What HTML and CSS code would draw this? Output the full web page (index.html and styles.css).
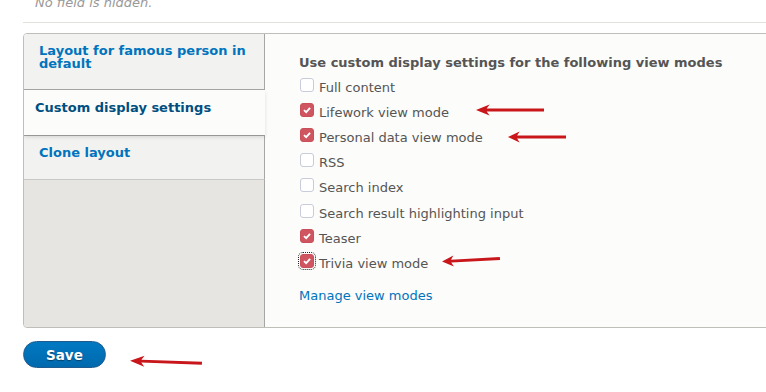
FILE: index.html
```html
<!DOCTYPE html>
<html lang="en">
<head>
    <meta charset="UTF-8">
    <meta name="viewport" content="width=device-width, initial-scale=1.0">
    <title>Manage display</title>
    <link rel="stylesheet" href="styles.css">
</head>
<body>

    <div class="page">
        <p class="description">No field is hidden.</p>
        <div class="divider"></div>

        <div class="vertical-tabs">
            <ul class="tabs-menu">
                <li class="tab"><a href="#">Layout for famous person in default</a></li>
                <li class="tab is-selected"><a href="#">Custom display settings</a></li>
                <li class="tab tab-last"><a href="#">Clone layout</a></li>
                <li class="tabs-filler"></li>
            </ul>

            <div class="tabs-pane">
                <div class="form-label">Use custom display settings for the following view modes</div>

                <label class="check-row"><span class="box"></span>Full content</label>
                <label class="check-row"><span class="box checked"><svg viewBox="0 0 14 14"><path d="M3.5 7.2 L6 9.6 L10.6 4.4" /></svg></span>Lifework view mode</label>
                <label class="check-row"><span class="box checked"><svg viewBox="0 0 14 14"><path d="M3.5 7.2 L6 9.6 L10.6 4.4" /></svg></span>Personal data view mode</label>
                <label class="check-row"><span class="box"></span>RSS</label>
                <label class="check-row"><span class="box"></span>Search index</label>
                <label class="check-row"><span class="box"></span>Search result highlighting input</label>
                <label class="check-row"><span class="box checked"><svg viewBox="0 0 14 14"><path d="M3.5 7.2 L6 9.6 L10.6 4.4" /></svg></span>Teaser</label>
                <label class="check-row"><span class="box checked focused"><svg viewBox="0 0 14 14"><path d="M3.5 7.2 L6 9.6 L10.6 4.4" /></svg></span>Trivia view mode</label>

                <a class="manage-link" href="#">Manage view modes</a>
            </div>
        </div>

        <button type="submit" class="button-primary">Save</button>

        <!-- annotation arrows -->
        <svg class="arrow arrow-1" viewBox="0 0 70 12" preserveAspectRatio="none"><path d="M0 6 L14 0.5 L11 4.6 L70 4.6 L70 7.6 L11 7.4 L14 11.5 Z" /></svg>
        <svg class="arrow arrow-2" viewBox="0 0 70 12" preserveAspectRatio="none"><path d="M0 6 L14 0.5 L11 4.6 L70 4.6 L70 7.6 L11 7.4 L14 11.5 Z" /></svg>
        <svg class="arrow arrow-3" viewBox="0 0 70 12" preserveAspectRatio="none"><path d="M0 6 L14 0.5 L11 4.6 L70 4.6 L70 7.6 L11 7.4 L14 11.5 Z" /></svg>
        <svg class="arrow arrow-4" viewBox="0 0 70 12" preserveAspectRatio="none"><path d="M0 6 L14 0.5 L11 4.6 L70 4.6 L70 7.6 L11 7.4 L14 11.5 Z" /></svg>
    </div>

</body>
</html>
```

FILE: styles.css
```css
body {
    margin: 0;
    background-color: white;
    font-family: "DejaVu Sans", sans-serif;
    font-size: 13px;
    color: #555;
    overflow: hidden;
}

.page {
    display: flow-root;
    position: relative;
    width: 800px;
    height: 392px;
    padding-left: 23px;
}

.description {
    margin: -6px 0 0 12px;
    line-height: 18px;
    font-style: italic;
    color: #999;
}

.divider {
    height: 1px;
    margin-top: 10px;
    background-color: #e2e1dc;
}

.vertical-tabs {
    display: flex;
    height: 293px;
    margin-top: 10px;
    border: 1px solid #bfbfba;
    border-radius: 4px 0 0 4px;
    overflow: hidden;
}

.tabs-menu {
    display: flex;
    flex-direction: column;
    width: 241px;
    margin: 0;
    padding: 0;
    list-style: none;
    background-color: #e6e5e1;
}

.tab {
    background-color: #f2f2f0;
    border-right: 1px solid #a6a6a6;
}

.tab a {
    display: block;
    font-weight: bold;
    color: #0074bd;
    text-decoration: none;
}

.tab:first-child {
    height: 55px;
    border-bottom: 1px solid #a6a6a6;
}

.tab:first-child a {
    padding: 10px 16px 0 15px;
    line-height: 13px;
}

.tab.is-selected {
    position: relative;
    z-index: 1;
    height: 45px;
    border-right: none;
    background-color: #fcfcfa;
    box-shadow: 0 2px 4px rgba(0, 0, 0, 0.12);
}

.tab.is-selected a {
    padding: 10px 12px 0 11px;
    line-height: 15px;
    color: #004f80;
}

.tab-last {
    height: 43px;
    border-top: 1px solid #a6a6a6;
    border-bottom: 1px solid #c8c8c5;
}

.tab-last a {
    padding: 9px 16px 0 15px;
    line-height: 15px;
}

.tabs-filler {
    flex: 1;
    border-right: 1px solid #a6a6a6;
}

.tabs-pane {
    flex: 1;
    padding: 20px 0 0 34px;
    background-color: #fcfcfa;
}

.form-label {
    font-weight: bold;
    line-height: 18px;
    margin-bottom: 3px;
}

.check-row {
    display: flex;
    align-items: flex-start;
    height: 25px;
    line-height: 25px;
}

.check-row:nth-child(7),
.check-row:nth-child(8),
.check-row:nth-child(9) {
    position: relative;
    top: 1px;
}

.box {
    box-sizing: border-box;
    width: 14px;
    height: 14px;
    margin: 3px 5px 0 1px;
    border: 1px solid #c8cbd9;
    border-radius: 3px;
    background-color: white;
}

.box.checked {
    border-color: #c95058;
    background-color: #cf5660;
}

.box svg {
    display: block;
    width: 12px;
    height: 12px;
    fill: none;
    stroke: white;
    stroke-width: 2.2;
}

.box.focused {
    outline: 1px dotted #222;
    outline-offset: 1px;
}

.manage-link {
    display: block;
    margin-top: 12px;
    line-height: 18px;
    color: #0074bd;
    text-decoration: none;
}

.button-primary {
    display: block;
    height: 27px;
    margin-top: 13px;
    padding: 0 22px;
    border: 1px solid #1e5c90;
    border-radius: 20px;
    background: linear-gradient(#0079c2, #0069ad);
    color: white;
    font-family: "DejaVu Sans", sans-serif;
    font-size: 13.5px;
    font-weight: bold;
    text-shadow: 0 1px 1px rgba(0, 0, 0, 0.4);
    cursor: pointer;
}

.arrow {
    position: absolute;
    height: 12px;
    fill: #c8161b;
}

.arrow-1 {
    left: 476px;
    top: 104px;
    width: 68px;
}

.arrow-2 {
    left: 508px;
    top: 131px;
    width: 58px;
}

.arrow-3 {
    left: 442px;
    top: 254px;
    width: 58px;
    transform: rotate(-3deg);
}

.arrow-4 {
    left: 130px;
    top: 356px;
    width: 72px;
    transform: rotate(2deg);
}
```
